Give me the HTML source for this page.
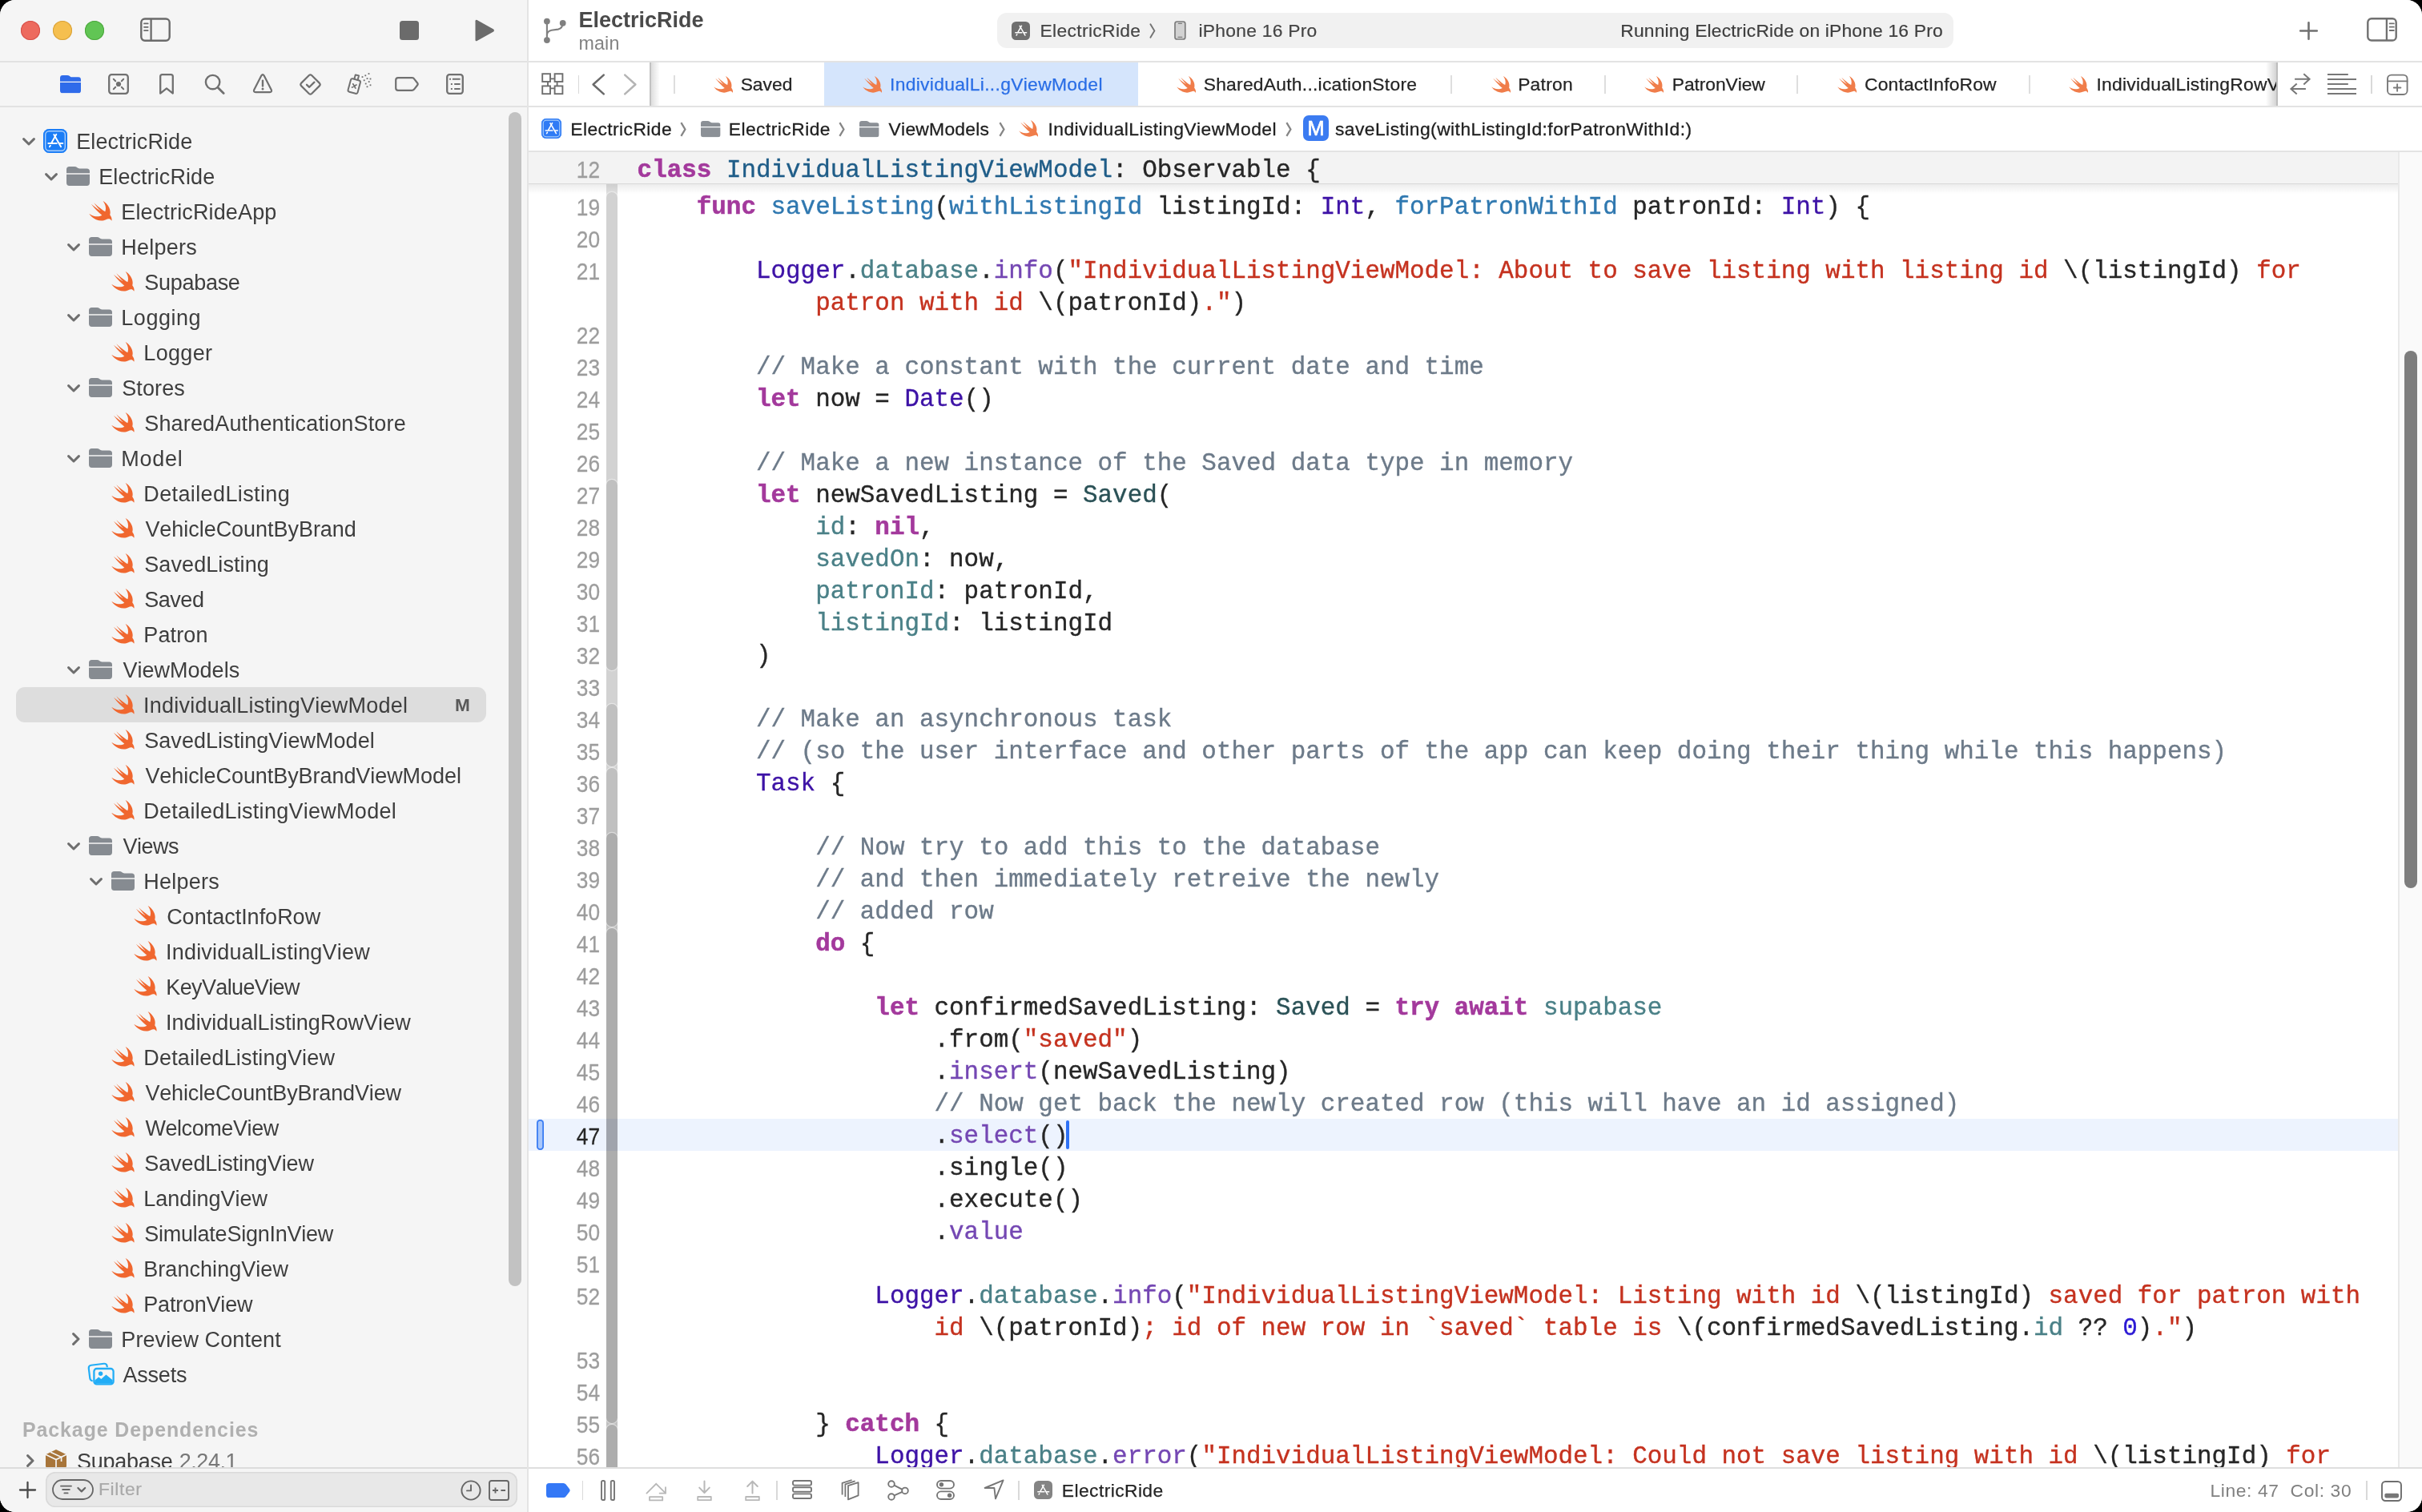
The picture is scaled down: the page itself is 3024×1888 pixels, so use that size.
<!DOCTYPE html>
<html><head><meta charset="utf-8"><title>Xcode</title>
<style>

html,body{margin:0;padding:0;background:#000;}
body{width:3024px;height:1888px;overflow:hidden;position:relative;font-family:"Liberation Sans",sans-serif;font-kerning:none;-webkit-font-smoothing:antialiased;}
#win{position:absolute;left:0;top:0;width:3024px;height:1888px;border-radius:19px;overflow:hidden;background:#fff;will-change:transform;}
.b{position:absolute;display:block;}
.t{position:absolute;white-space:pre;}
svg{overflow:visible;}
.cl{position:absolute;left:795.6px;white-space:pre;font-family:"Liberation Mono",monospace;font-size:30.91px;line-height:40px;height:40px;color:#262626;font-kerning:none;-webkit-text-stroke:0.35px currentColor;}
.cl span{-webkit-text-stroke:0.35px currentColor;}
.ln{position:absolute;left:648.5px;width:100px;text-align:right;font-size:30px;line-height:40px;height:40px;color:#9d9d9d;-webkit-text-stroke:0.3px #9d9d9d;transform:scaleX(0.875);transform-origin:100% 50%;}
.k{color:#a3399c;font-weight:bold;-webkit-text-stroke:0.5px currentColor !important;}
.td{color:#1f5d88;}
.fd{color:#2f78b0;}
.pt{color:#2a5156;}
.pv{color:#4a8087;}
.st{color:#3d12a6;}
.sf{color:#7447b3;}
.s{color:#c5321f;}
.n{color:#2a17d4;}
.c{color:#6c7a89;}

</style></head><body>
<svg width="0" height="0" style="position:absolute">
<defs>
<symbol id="swift" viewBox="2.3 3.4 18.5 16.6" preserveAspectRatio="none"><path d="M13.543 3.41c4.114 2.47 6.545 7.162 5.549 11.131-.024.093-.05.181-.076.272l.002.001c2.062 2.538 1.5 5.258 1.236 4.745-1.072-2.086-3.066-1.568-4.088-1.043a6.803 6.803 0 0 1-.281.158l-.02.012-.002.002c-2.115 1.123-4.957 1.205-7.812-.022a12.568 12.568 0 0 1-5.64-4.838c.649.48 1.35.902 2.097 1.252 3.019 1.414 6.051 1.311 8.197-.002C9.651 12.73 7.101 9.67 5.146 7.191a10.628 10.628 0 0 1-1.005-1.384c2.34 2.142 6.038 4.83 7.365 5.576C8.69 8.408 6.208 4.743 6.324 4.86c4.436 4.47 8.528 6.996 8.528 6.996.154.085.27.154.36.213.085-.215.16-.437.224-.668.708-2.588-.09-5.548-1.893-7.992z"/></symbol>
<symbol id="folder" viewBox="0 0 29 24"><path d="M0 3.6 Q0 0 3.6 0 L10 0 Q12 0 13.4 1.2 L14.6 2.1 Q15.3 2.5 16.4 2.5 L25.4 2.5 Q29 2.5 29 6.1 L29 8.3 L0 8.3 Z M0 9.7 L29 9.7 L29 20.3 Q29 23.9 25.4 23.9 L3.6 23.9 Q0 23.9 0 20.3 Z"/></symbol>
<symbol id="chd" viewBox="0 0 16 10"><path d="M1.6 1.6 L8 8 L14.4 1.6" fill="none" stroke="#6e6e6e" stroke-width="3" stroke-linecap="round" stroke-linejoin="round"/></symbol>
<symbol id="chr" viewBox="0 0 10 16"><path d="M1.6 1.6 L8 8 L1.6 14.4" fill="none" stroke="#6e6e6e" stroke-width="3" stroke-linecap="round" stroke-linejoin="round"/></symbol>
<symbol id="appA" viewBox="0 0 30 30">
 <g fill="none" stroke="#fff" stroke-width="1.9" stroke-linecap="round">
  <path d="M16.3 6.8 L10.4 17.2"/><path d="M13.3 7 L22.1 22.3"/><path d="M6.3 18 H16.8"/><path d="M20.3 18 H24.3"/><path d="M8.9 20.7 L7.9 22.3"/>
 </g>
</symbol>
</defs></svg>
<div id="win">
<div class="b" style="left:0px;top:0px;width:658px;height:1888px;background:#f5f5f5;"></div>
<div class="b" style="left:658px;top:0px;width:2px;height:1888px;background:#e4e4e4;"></div>
<div class="b" style="left:0px;top:76px;width:658px;height:2px;background:#e2e2e2;"></div>
<div class="b" style="left:0px;top:132px;width:658px;height:2px;background:#e2e2e2;"></div>
<div class="b" style="left:26px;top:26px;width:24px;height:24px;background:#ed6a5e;border-radius:50%;box-shadow:inset 0 0 0 1px #d5504a;"></div>
<div class="b" style="left:66px;top:26px;width:24px;height:24px;background:#f5bf4f;border-radius:50%;box-shadow:inset 0 0 0 1px #d8a13a;"></div>
<div class="b" style="left:106px;top:26px;width:24px;height:24px;background:#61c554;border-radius:50%;box-shadow:inset 0 0 0 1px #4da73e;"></div>
<svg class="b" style="left:175px;top:22px" width="38" height="30" viewBox="0 0 38 30"><rect x="1.3" y="1.5" width="35.4" height="27.2" rx="4.6" fill="none" stroke="#6b6b6b" stroke-width="2.4"/><path d="M13.6 1.5 V28.5" stroke="#6b6b6b" stroke-width="2.3"/><path d="M5 7.4 H9.7 M5 11.8 H9.7 M5 16.1 H9.7" stroke="#6b6b6b" stroke-width="1.8" stroke-linecap="round"/></svg>
<div class="b" style="left:499px;top:26px;width:24px;height:24px;background:#6b6b6b;border-radius:3.5px;"></div>
<svg class="b" style="left:591px;top:23px" width="28" height="30" viewBox="0 0 28 30"><path d="M2.5 3.2 Q2.5 1 4.6 2 L25.2 13.4 Q27 15 25.2 16.6 L4.6 28 Q2.5 29 2.5 26.8 Z" fill="#6b6b6b"/></svg>
<svg class="b" style="left:75px;top:94px" width="26" height="22.4" viewBox="0 0 29 24" preserveAspectRatio="none" fill="#2f6bea"><use href="#folder"/></svg>
<svg class="b" style="left:135px;top:92px" width="26" height="26" viewBox="0 0 26 26" fill="none" stroke="#707070" stroke-width="2.3" stroke-linecap="round"><rect x="1.2" y="1.2" width="23.6" height="23.6" rx="3.2"/><circle cx="13" cy="13" r="3.1" fill="#707070" stroke="none"/><path d="M6.8 6.8 L9.2 9.2 M19.2 6.8 L16.8 9.2 M6.8 19.2 L9.2 16.8 M19.2 19.2 L16.8 16.8" stroke-width="2"/></svg>
<svg class="b" style="left:199px;top:92px" width="18" height="26" viewBox="0 0 18 26" fill="none" stroke="#707070" stroke-width="2.3" stroke-linejoin="round"><path d="M1.2 3.6 Q1.2 1.2 3.6 1.2 H14.4 Q16.8 1.2 16.8 3.6 V24.6 L9 18.4 L1.2 24.6 Z"/></svg>
<svg class="b" style="left:255px;top:92px" width="26" height="26" viewBox="0 0 26 26" fill="none" stroke="#707070" stroke-width="2.4" stroke-linecap="round"><circle cx="10.6" cy="10.6" r="8.7"/><path d="M17.2 17.4 L24.2 24.4" stroke-width="2.8"/></svg>
<svg class="b" style="left:315px;top:92px" width="26" height="25" viewBox="0 0 26 25" fill="none" stroke="#707070" stroke-width="2.2" stroke-linejoin="round"><path d="M11.4 2.3 Q13 -0.1 14.6 2.3 L23.7 19.9 Q24.9 23.1 21.9 23.1 H4.1 Q1.1 23.1 2.3 19.9 Z"/><path d="M13 8.6 V15.4" stroke-width="2.4" stroke-linecap="round"/><circle cx="13" cy="19" r="1.5" fill="#707070" stroke="none"/></svg>
<svg class="b" style="left:374px;top:91.5px" width="27" height="27" viewBox="0 0 27 27" fill="none" stroke="#707070" stroke-width="2.2" stroke-linejoin="round" stroke-linecap="round"><path d="M11.9 2 Q13.5 0.6 15.1 2 L25 11.9 Q26.4 13.5 25 15.1 L15.1 25 Q13.5 26.4 11.9 25 L2 15.1 Q0.6 13.5 2 11.9 Z"/><path d="M9 13.8 L12.2 16.8 L18.4 10.6" stroke-width="2.3"/></svg>
<svg class="b" style="left:433.6px;top:90.4px" width="31" height="28" viewBox="0 0 31 28" fill="none" stroke="#707070" stroke-width="2" stroke-linejoin="round" stroke-linecap="round"><g transform="rotate(15 8 17)"><rect x="2.2" y="9" width="12.4" height="17" rx="2.2"/><path d="M6.2 9 V3.4 H10.6 V9"/><path d="M6.2 15.2 L10.6 19.6 M10.6 15.2 L6.2 19.6" stroke-width="1.7"/></g><g fill="#707070" stroke="none"><rect x="25.6" y="1.2" width="1.8" height="1.8"/><rect x="21.4" y="3.4" width="1.8" height="1.8"/><rect x="17.6" y="5.2" width="1.8" height="1.8"/><rect x="23.6" y="7.2" width="1.8" height="1.8"/><rect x="27.6" y="7.6" width="1.8" height="1.8"/><rect x="19.8" y="9.4" width="1.8" height="1.8"/><rect x="25.8" y="11.2" width="1.8" height="1.8"/><rect x="21.8" y="13.6" width="1.8" height="1.8"/><rect x="27.6" y="15.4" width="1.8" height="1.8"/><rect x="23.6" y="17.4" width="1.8" height="1.8"/></g></svg>
<svg class="b" style="left:492.5px;top:96px" width="30" height="18" viewBox="0 0 30 18" fill="none" stroke="#707070" stroke-width="2.2" stroke-linejoin="round"><path d="M4 1.2 H21.6 Q23.4 1.2 24.4 2.8 L28.4 8 Q29 9 28.4 10 L24.4 15.2 Q23.4 16.8 21.6 16.8 H4 Q1.2 16.8 1.2 14 V4 Q1.2 1.2 4 1.2 Z"/></svg>
<svg class="b" style="left:557px;top:92px" width="22" height="26" viewBox="0 0 22 26" fill="none" stroke="#707070" stroke-width="2.3" stroke-linecap="butt"><rect x="1.2" y="1.2" width="19.6" height="23.6" rx="3"/><path d="M7.9 6.8 H17.6 M10.2 12.9 H17.6 M10.2 19 H17.6" stroke-width="2"/><path d="M4.1 6.8 H6 M5.9 12.9 H7.8 M5.9 19 H7.8" stroke-width="2"/></svg>
<div class="b" style="left:635px;top:140px;width:16px;height:1466px;background:#c2c2c2;border-radius:8px;"></div>
<svg class="b" style="left:28.0px;top:171.8px;" width="16" height="10"><use href="#chd"/></svg>
<div class="b" style="left:54px;top:161px;width:30px;height:30px;border-radius:7.5px;background:#1b7df6;box-shadow:inset 0 0 0 2px #1b7df6, inset 0 0 0 3.4px #a7cdfb;"></div>
<svg class="b" style="left:54.0px;top:161.0px;" width="30" height="30"><use href="#appA"/></svg>
<div class="t " style="left:95.29px;top:159.84px;font-size:27.0px;line-height:35px;color:#3e3e3e;letter-spacing:0.079px;">ElectricRide</div>
<svg class="b" style="left:56.0px;top:215.8px;" width="16" height="10"><use href="#chd"/></svg>
<svg class="b" style="left:82.5px;top:208.0px;fill:#868b91;" width="29" height="24"><use href="#folder"/></svg>
<div class="t " style="left:123.29px;top:203.84px;font-size:27.0px;line-height:35px;color:#3e3e3e;letter-spacing:0.079px;">ElectricRide</div>
<svg class="b" style="left:110.6px;top:250.9px;fill:#f0672f;" width="29" height="25.2"><use href="#swift"/></svg>
<div class="t " style="left:151.29px;top:247.84px;font-size:27.0px;line-height:35px;color:#3e3e3e;letter-spacing:0.140px;">ElectricRideApp</div>
<svg class="b" style="left:84.0px;top:303.8px;" width="16" height="10"><use href="#chd"/></svg>
<svg class="b" style="left:110.5px;top:296.0px;fill:#868b91;" width="29" height="24"><use href="#folder"/></svg>
<div class="t " style="left:151.29px;top:291.84px;font-size:27.0px;line-height:35px;color:#3e3e3e;letter-spacing:0.242px;">Helpers</div>
<svg class="b" style="left:138.6px;top:338.9px;fill:#f0672f;" width="29" height="25.2"><use href="#swift"/></svg>
<div class="t " style="left:180.27px;top:335.84px;font-size:27.0px;line-height:35px;color:#3e3e3e;letter-spacing:-0.283px;">Supabase</div>
<svg class="b" style="left:84.0px;top:391.8px;" width="16" height="10"><use href="#chd"/></svg>
<svg class="b" style="left:110.5px;top:384.0px;fill:#868b91;" width="29" height="24"><use href="#folder"/></svg>
<div class="t " style="left:151.29px;top:379.84px;font-size:27.0px;line-height:35px;color:#3e3e3e;letter-spacing:0.543px;">Logging</div>
<svg class="b" style="left:138.6px;top:426.9px;fill:#f0672f;" width="29" height="25.2"><use href="#swift"/></svg>
<div class="t " style="left:179.29px;top:423.84px;font-size:27.0px;line-height:35px;color:#3e3e3e;letter-spacing:0.338px;">Logger</div>
<svg class="b" style="left:84.0px;top:479.8px;" width="16" height="10"><use href="#chd"/></svg>
<svg class="b" style="left:110.5px;top:472.0px;fill:#868b91;" width="29" height="24"><use href="#folder"/></svg>
<div class="t " style="left:152.27px;top:467.84px;font-size:27.0px;line-height:35px;color:#3e3e3e;letter-spacing:0.094px;">Stores</div>
<svg class="b" style="left:138.6px;top:514.9px;fill:#f0672f;" width="29" height="25.2"><use href="#swift"/></svg>
<div class="t " style="left:180.27px;top:511.84px;font-size:27.0px;line-height:35px;color:#3e3e3e;letter-spacing:0.154px;">SharedAuthenticationStore</div>
<svg class="b" style="left:84.0px;top:567.8px;" width="16" height="10"><use href="#chd"/></svg>
<svg class="b" style="left:110.5px;top:560.0px;fill:#868b91;" width="29" height="24"><use href="#folder"/></svg>
<div class="t " style="left:151.29px;top:555.84px;font-size:27.0px;line-height:35px;color:#3e3e3e;letter-spacing:0.746px;">Model</div>
<svg class="b" style="left:138.6px;top:602.9px;fill:#f0672f;" width="29" height="25.2"><use href="#swift"/></svg>
<div class="t " style="left:179.29px;top:599.84px;font-size:27.0px;line-height:35px;color:#3e3e3e;letter-spacing:0.382px;">DetailedListing</div>
<svg class="b" style="left:138.6px;top:646.9px;fill:#f0672f;" width="29" height="25.2"><use href="#swift"/></svg>
<div class="t " style="left:181.38px;top:643.84px;font-size:27.0px;line-height:35px;color:#3e3e3e;letter-spacing:-0.039px;">VehicleCountByBrand</div>
<svg class="b" style="left:138.6px;top:690.9px;fill:#f0672f;" width="29" height="25.2"><use href="#swift"/></svg>
<div class="t " style="left:180.27px;top:687.84px;font-size:27.0px;line-height:35px;color:#3e3e3e;letter-spacing:0.087px;">SavedListing</div>
<svg class="b" style="left:138.6px;top:734.9px;fill:#f0672f;" width="29" height="25.2"><use href="#swift"/></svg>
<div class="t " style="left:180.27px;top:731.84px;font-size:27.0px;line-height:35px;color:#3e3e3e;letter-spacing:-0.473px;">Saved</div>
<svg class="b" style="left:138.6px;top:778.9px;fill:#f0672f;" width="29" height="25.2"><use href="#swift"/></svg>
<div class="t " style="left:179.29px;top:775.84px;font-size:27.0px;line-height:35px;color:#3e3e3e;letter-spacing:0.144px;">Patron</div>
<svg class="b" style="left:84.0px;top:831.8px;" width="16" height="10"><use href="#chd"/></svg>
<svg class="b" style="left:110.5px;top:824.0px;fill:#868b91;" width="29" height="24"><use href="#folder"/></svg>
<div class="t " style="left:153.38px;top:819.84px;font-size:27.0px;line-height:35px;color:#3e3e3e;letter-spacing:0.026px;">ViewModels</div>
<div class="b" style="left:20px;top:858px;width:587px;height:44px;background:#dddddd;border-radius:11px;"></div>
<div class="t " style="left:567.99px;top:866.37px;font-size:22.6px;line-height:29px;color:#5a5a5a;font-weight:bold;">M</div>
<svg class="b" style="left:138.6px;top:866.9px;fill:#f0672f;" width="29" height="25.2"><use href="#swift"/></svg>
<div class="t " style="left:179.01px;top:863.84px;font-size:27.0px;line-height:35px;color:#3e3e3e;letter-spacing:0.229px;">IndividualListingViewModel</div>
<svg class="b" style="left:138.6px;top:910.9px;fill:#f0672f;" width="29" height="25.2"><use href="#swift"/></svg>
<div class="t " style="left:180.27px;top:907.84px;font-size:27.0px;line-height:35px;color:#3e3e3e;letter-spacing:0.038px;">SavedListingViewModel</div>
<svg class="b" style="left:138.6px;top:954.9px;fill:#f0672f;" width="29" height="25.2"><use href="#swift"/></svg>
<div class="t " style="left:181.38px;top:951.84px;font-size:27.0px;line-height:35px;color:#3e3e3e;letter-spacing:-0.063px;">VehicleCountByBrandViewModel</div>
<svg class="b" style="left:138.6px;top:998.9px;fill:#f0672f;" width="29" height="25.2"><use href="#swift"/></svg>
<div class="t " style="left:179.29px;top:995.84px;font-size:27.0px;line-height:35px;color:#3e3e3e;letter-spacing:0.272px;">DetailedListingViewModel</div>
<svg class="b" style="left:84.0px;top:1051.8px;" width="16" height="10"><use href="#chd"/></svg>
<svg class="b" style="left:110.5px;top:1044.0px;fill:#868b91;" width="29" height="24"><use href="#folder"/></svg>
<div class="t " style="left:153.38px;top:1039.84px;font-size:27.0px;line-height:35px;color:#3e3e3e;letter-spacing:-0.482px;">Views</div>
<svg class="b" style="left:112.0px;top:1095.8px;" width="16" height="10"><use href="#chd"/></svg>
<svg class="b" style="left:138.5px;top:1088.0px;fill:#868b91;" width="29" height="24"><use href="#folder"/></svg>
<div class="t " style="left:179.29px;top:1083.84px;font-size:27.0px;line-height:35px;color:#3e3e3e;letter-spacing:0.242px;">Helpers</div>
<svg class="b" style="left:166.6px;top:1130.9px;fill:#f0672f;" width="29" height="25.2"><use href="#swift"/></svg>
<div class="t " style="left:208.13px;top:1127.84px;font-size:27.0px;line-height:35px;color:#3e3e3e;letter-spacing:-0.007px;">ContactInfoRow</div>
<svg class="b" style="left:166.6px;top:1174.9px;fill:#f0672f;" width="29" height="25.2"><use href="#swift"/></svg>
<div class="t " style="left:207.01px;top:1171.84px;font-size:27.0px;line-height:35px;color:#3e3e3e;letter-spacing:0.204px;">IndividualListingView</div>
<svg class="b" style="left:166.6px;top:1218.9px;fill:#f0672f;" width="29" height="25.2"><use href="#swift"/></svg>
<div class="t " style="left:207.29px;top:1215.84px;font-size:27.0px;line-height:35px;color:#3e3e3e;letter-spacing:-0.632px;">KeyValueView</div>
<svg class="b" style="left:166.6px;top:1262.9px;fill:#f0672f;" width="29" height="25.2"><use href="#swift"/></svg>
<div class="t " style="left:207.01px;top:1259.84px;font-size:27.0px;line-height:35px;color:#3e3e3e;letter-spacing:0.046px;">IndividualListingRowView</div>
<svg class="b" style="left:138.6px;top:1306.9px;fill:#f0672f;" width="29" height="25.2"><use href="#swift"/></svg>
<div class="t " style="left:179.29px;top:1303.84px;font-size:27.0px;line-height:35px;color:#3e3e3e;letter-spacing:0.168px;">DetailedListingView</div>
<svg class="b" style="left:138.6px;top:1350.9px;fill:#f0672f;" width="29" height="25.2"><use href="#swift"/></svg>
<div class="t " style="left:181.38px;top:1347.84px;font-size:27.0px;line-height:35px;color:#3e3e3e;letter-spacing:-0.138px;">VehicleCountByBrandView</div>
<svg class="b" style="left:138.6px;top:1394.9px;fill:#f0672f;" width="29" height="25.2"><use href="#swift"/></svg>
<div class="t " style="left:181.38px;top:1391.84px;font-size:27.0px;line-height:35px;color:#3e3e3e;letter-spacing:-0.419px;">WelcomeView</div>
<svg class="b" style="left:138.6px;top:1438.9px;fill:#f0672f;" width="29" height="25.2"><use href="#swift"/></svg>
<div class="t " style="left:180.27px;top:1435.84px;font-size:27.0px;line-height:35px;color:#3e3e3e;letter-spacing:-0.091px;">SavedListingView</div>
<svg class="b" style="left:138.6px;top:1482.9px;fill:#f0672f;" width="29" height="25.2"><use href="#swift"/></svg>
<div class="t " style="left:179.29px;top:1479.84px;font-size:27.0px;line-height:35px;color:#3e3e3e;letter-spacing:0.013px;">LandingView</div>
<svg class="b" style="left:138.6px;top:1526.9px;fill:#f0672f;" width="29" height="25.2"><use href="#swift"/></svg>
<div class="t " style="left:180.27px;top:1523.84px;font-size:27.0px;line-height:35px;color:#3e3e3e;letter-spacing:-0.239px;">SimulateSignInView</div>
<svg class="b" style="left:138.6px;top:1570.9px;fill:#f0672f;" width="29" height="25.2"><use href="#swift"/></svg>
<div class="t " style="left:179.29px;top:1567.84px;font-size:27.0px;line-height:35px;color:#3e3e3e;letter-spacing:0.046px;">BranchingView</div>
<svg class="b" style="left:138.6px;top:1614.9px;fill:#f0672f;" width="29" height="25.2"><use href="#swift"/></svg>
<div class="t " style="left:179.29px;top:1611.84px;font-size:27.0px;line-height:35px;color:#3e3e3e;letter-spacing:-0.214px;">PatronView</div>
<svg class="b" style="left:89.5px;top:1664.0px;" width="10" height="16"><use href="#chr"/></svg>
<svg class="b" style="left:110.5px;top:1660.0px;fill:#868b91;" width="29" height="24"><use href="#folder"/></svg>
<div class="t " style="left:151.29px;top:1655.84px;font-size:27.0px;line-height:35px;color:#3e3e3e;letter-spacing:0.094px;">Preview Content</div>
<svg class="b" style="left:108.5px;top:1701px" width="34" height="29" viewBox="0 0 34 29"><g transform="rotate(-7 13 12)"><rect x="2.4" y="2.8" width="23" height="19.6" rx="3.4" fill="none" stroke="#22adf6" stroke-width="2.2"/></g><rect x="8.4" y="8" width="24.2" height="19.4" rx="3.4" fill="#f5f5f5" stroke="#f5f5f5" stroke-width="3.4"/><rect x="8.4" y="8" width="24.2" height="19.4" rx="3.4" fill="#f5f5f5" stroke="#22adf6" stroke-width="2.3"/><circle cx="16.6" cy="14.2" r="2.7" fill="#22adf6"/><path d="M9.4 22.6 L14.2 18.4 L17.4 21 L23.4 15.6 L31.6 22.2 V24.4 Q31.6 26.4 29.6 26.4 H11.4 Q9.4 26.4 9.4 24.4 Z" fill="#22adf6"/></svg>
<div class="t " style="left:153.45px;top:1699.84px;font-size:27.0px;line-height:35px;color:#3e3e3e;letter-spacing:-0.200px;">Assets</div>
<div class="t " style="left:28.03px;top:1768.57px;font-size:24.92px;line-height:32px;color:#b0b0b0;font-weight:bold;letter-spacing:0.919px;">Package Dependencies</div>
<svg class="b" style="left:33.0px;top:1816.0px;" width="10" height="16"><use href="#chr"/></svg>
<svg class="b" style="left:56px;top:1809px" width="28" height="30" viewBox="0 0 28 30"><path d="M14 1 L27 7.2 V22.4 L14 29 L1 22.4 V7.2 Z" fill="#a8753a"/><path d="M1 7.2 L14 13.6 L27 7.2 M14 13.6 V29" fill="none" stroke="#f5f5f5" stroke-width="1.7"/><path d="M7.2 4.2 L20.6 10.6 V16" fill="none" stroke="#f5f5f5" stroke-width="1.7"/></svg>
<div class="t " style="left:96.07px;top:1807.84px;font-size:27.0px;line-height:35px;color:#3e3e3e;letter-spacing:-0.283px;">Supabase</div>
<div class="t " style="left:223.64px;top:1807.84px;font-size:27.0px;line-height:35px;color:#777777;letter-spacing:-0.418px;">2.24.1</div>
<div class="b" style="left:0px;top:1833px;width:658px;height:55px;background:#f5f5f5;"></div>
<div class="b" style="left:0px;top:1832px;width:658px;height:2px;background:#dcdcdc;"></div>
<div class="b" style="left:57px;top:1837.8px;width:589px;height:43.8px;background:#e8e8e8;border-radius:12px;box-shadow:inset 0 0 0 1.5px #d9d9d9;"></div>
<svg class="b" style="left:24px;top:1850px" width="21" height="21" viewBox="0 0 22 22"><path d="M11 1 V21 M1 11 H21" stroke="#4a4a4a" stroke-width="2.4" stroke-linecap="round"/></svg>
<svg class="b" style="left:65px;top:1847px" width="52" height="26" viewBox="0 0 52 26"><rect x="1" y="1" width="50" height="24" rx="12" fill="none" stroke="#666" stroke-width="1.8"/><path d="M11 8.6 H24 M13.2 13 H21.8 M15.4 17.4 H19.6" stroke="#666" stroke-width="1.9" stroke-linecap="round"/><path d="M32.4 11 L36.8 15.4 L41.2 11" fill="none" stroke="#666" stroke-width="2.2" stroke-linecap="round" stroke-linejoin="round"/></svg>
<div class="t " style="left:122.93px;top:1843.98px;font-size:22.85px;line-height:30px;color:#a9a9a9;-webkit-text-stroke:0.2px #a9a9a9;letter-spacing:0.655px;">Filter</div>
<svg class="b" style="left:575px;top:1847.5px" width="26" height="26" viewBox="0 0 26 26"><circle cx="13" cy="13" r="11.6" fill="none" stroke="#666" stroke-width="1.9"/><path d="M13 6.4 V13.4 H8" fill="none" stroke="#666" stroke-width="1.9" stroke-linecap="round" stroke-linejoin="round"/></svg>
<svg class="b" style="left:609.5px;top:1847.5px" width="26" height="26" viewBox="0 0 26 26"><rect x="1" y="1" width="24" height="24" rx="2.6" fill="none" stroke="#666" stroke-width="1.9"/><path d="M5 13 H12 M8.5 9.5 V16.5 M15.4 13 H21" stroke="#666" stroke-width="1.9"/></svg>
<div class="b" style="left:660px;top:0px;width:2364px;height:76px;background:#ffffff;"></div>
<div class="b" style="left:660px;top:76px;width:2364px;height:2px;background:#e3e3e3;"></div>
<svg class="b" style="left:677px;top:20px" width="32" height="36" viewBox="0 0 32 36" fill="none" stroke="#808080" stroke-width="2.1" stroke-linecap="round"><path d="M5.9 6.6 V30.1"/><path d="M25.7 8.8 Q25.5 15.6 19.8 16.6 L11.6 17.8 Q6 19 5.9 24"/><circle cx="5.9" cy="6.6" r="3.9" fill="#808080" stroke="none"/><circle cx="5.9" cy="30.1" r="3.9" fill="#808080" stroke="none"/><circle cx="25.7" cy="8.8" r="3.9" fill="#808080" stroke="none"/></svg>
<div class="t " style="left:722.49px;top:8.14px;font-size:27.0px;line-height:35px;color:#4a4a4a;font-weight:bold;">ElectricRide</div>
<div class="t " style="left:722.46px;top:38.74px;font-size:23.26px;line-height:30px;color:#828282;letter-spacing:0.180px;">main</div>
<div class="b" style="left:1245px;top:16px;width:1194px;height:44px;background:#f1f1f1;border-radius:12px;"></div>
<div class="b" style="left:1263px;top:27px;width:23px;height:23px;background:#6f6f6f;border-radius:5.5px;"></div>
<svg class="b" style="left:1263.0px;top:27.0px;" width="23" height="23"><use href="#appA"/></svg>
<div class="t " style="left:1298.43px;top:23.28px;font-size:22.85px;line-height:30px;color:#444;-webkit-text-stroke:0.2px #444;letter-spacing:0.344px;">ElectricRide</div>
<svg class="b" style="left:1435px;top:29px" width="8" height="19" viewBox="0 0 8 19"><path d="M1.4 1.2 L6.4 9.5 L1.4 17.8" fill="none" stroke="#737373" stroke-width="1.9" stroke-linecap="round" stroke-linejoin="miter"/></svg>
<svg class="b" style="left:1465.8px;top:26.2px" width="15" height="24" viewBox="0 0 15 24"><rect x="1" y="1" width="12.8" height="22" rx="2.6" fill="#d2d2d2" stroke="#7c7c7c" stroke-width="1.7"/><path d="M5.4 3.4 H9.4 M5 20.4 H9.8" stroke="#7c7c7c" stroke-width="1.2" stroke-linecap="round"/></svg>
<div class="t " style="left:1496.47px;top:23.28px;font-size:22.85px;line-height:30px;color:#444;-webkit-text-stroke:0.2px #444;letter-spacing:0.247px;">iPhone 16 Pro</div>
<div class="t " style="left:2023.33px;top:23.28px;font-size:22.85px;line-height:30px;color:#3e3e3e;-webkit-text-stroke:0.2px #3e3e3e;letter-spacing:0.170px;">Running ElectricRide on iPhone 16 Pro</div>
<svg class="b" style="left:2870.5px;top:26.5px" width="23" height="23" viewBox="0 0 23 23"><path d="M11.5 1.2 V21.8 M1.2 11.5 H21.8" stroke="#707070" stroke-width="2.6" stroke-linecap="round"/></svg>
<svg class="b" style="left:2955px;top:22.3px" width="38" height="30" viewBox="0 0 38 30"><rect x="1.3" y="1.3" width="35.4" height="27.2" rx="4.6" fill="none" stroke="#707070" stroke-width="2.4"/><path d="M24.9 1.5 V28.5" stroke="#707070" stroke-width="2.3"/><path d="M28.6 7.4 H33.8 M28.6 11.7 H33.8 M28.6 16 H33.8" stroke="#707070" stroke-width="1.8" stroke-linecap="round"/></svg>
<div class="b" style="left:660px;top:78px;width:2364px;height:54px;background:#ffffff;"></div>
<div class="b" style="left:660px;top:132px;width:2364px;height:2px;background:#e3e3e3;"></div>
<div class="b" style="left:1029px;top:78px;width:392px;height:54px;background:#d5e5fc;"></div>
<svg class="b" style="left:676.3px;top:91.4px" width="28" height="28" viewBox="0 0 28 28" fill="none" stroke="#6e6e6e" stroke-width="1.9"><rect x="1.2" y="1.2" width="9.8" height="9.8"/><rect x="16.6" y="1.2" width="9.8" height="9.8"/><rect x="1.2" y="16.4" width="9.8" height="9.8"/><rect x="16.6" y="16.4" width="9.8" height="9.8"/><path d="M11 7.4 H16.6 M11 19.4 H16.6 M8 11 V16.4 M19.6 11 V16.4"/></svg>
<div class="b" style="left:721.5px;top:94px;width:1.6px;height:23px;background:#d9d9d9;"></div>
<svg class="b" style="left:738px;top:92px" width="18" height="27" viewBox="0 0 18 27"><path d="M15.8 1.6 L2.6 13.5 L15.8 25.4" fill="none" stroke="#6a6a6a" stroke-width="2.5" stroke-linecap="round" stroke-linejoin="round"/></svg>
<svg class="b" style="left:778px;top:92px" width="18" height="27" viewBox="0 0 18 27"><path d="M2.2 1.6 L15.4 13.5 L2.2 25.4" fill="none" stroke="#b4b4b4" stroke-width="2.5" stroke-linecap="round" stroke-linejoin="round"/></svg>
<div class="b" style="left:811px;top:78px;width:2.2px;height:54px;background:#c2c2c2;"></div>
<div class="b" style="left:813.2px;top:78px;width:11px;height:54px;background:transparent;background:linear-gradient(90deg,rgba(0,0,0,0.13),rgba(0,0,0,0));"></div>
<div class="b" style="left:841px;top:94px;width:2px;height:23px;background:#dedede;"></div>
<div class="b" style="left:1811px;top:94px;width:2px;height:23px;background:#dedede;"></div>
<div class="b" style="left:2003px;top:94px;width:2px;height:23px;background:#dedede;"></div>
<div class="b" style="left:2243px;top:94px;width:2px;height:23px;background:#dedede;"></div>
<div class="b" style="left:2533px;top:94px;width:2px;height:23px;background:#dedede;"></div>
<svg class="b" style="left:891.0px;top:94.5px;fill:#f07d4a;" width="24.5" height="21.3"><use href="#swift"/></svg>
<div class="t " style="left:924.66px;top:90.18px;font-size:22.85px;line-height:30px;color:#242424;-webkit-text-stroke:0.25px #242424;letter-spacing:-0.020px;">Saved</div>
<svg class="b" style="left:1077.0px;top:94.5px;fill:#f07d4a;" width="24.5" height="21.3"><use href="#swift"/></svg>
<div class="t " style="left:1110.99px;top:90.18px;font-size:22.85px;line-height:30px;color:#2a6ee6;-webkit-text-stroke:0.25px #2a6ee6;letter-spacing:0.321px;">IndividualLi...gViewModel</div>
<svg class="b" style="left:1469.4px;top:94.5px;fill:#f07d4a;" width="24.5" height="21.3"><use href="#swift"/></svg>
<div class="t " style="left:1502.66px;top:90.18px;font-size:22.85px;line-height:30px;color:#242424;-webkit-text-stroke:0.25px #242424;letter-spacing:0.248px;">SharedAuth...icationStore</div>
<svg class="b" style="left:1861.5px;top:94.5px;fill:#f07d4a;" width="24.5" height="21.3"><use href="#swift"/></svg>
<div class="t " style="left:1895.13px;top:90.18px;font-size:22.85px;line-height:30px;color:#242424;-webkit-text-stroke:0.25px #242424;letter-spacing:0.247px;">Patron</div>
<svg class="b" style="left:2053.0px;top:94.5px;fill:#f07d4a;" width="24.5" height="21.3"><use href="#swift"/></svg>
<div class="t " style="left:2087.83px;top:90.18px;font-size:22.85px;line-height:30px;color:#242424;-webkit-text-stroke:0.25px #242424;letter-spacing:-0.092px;">PatronView</div>
<svg class="b" style="left:2294.0px;top:94.5px;fill:#f07d4a;" width="24.5" height="21.3"><use href="#swift"/></svg>
<div class="t " style="left:2328.04px;top:90.18px;font-size:22.85px;line-height:30px;color:#242424;-webkit-text-stroke:0.25px #242424;letter-spacing:0.149px;">ContactInfoRow</div>
<svg class="b" style="left:2583.0px;top:94.5px;fill:#f07d4a;" width="24.5" height="21.3"><use href="#swift"/></svg>
<div class="t " style="left:2617.39px;top:90.18px;font-size:22.85px;line-height:30px;color:#242424;-webkit-text-stroke:0.25px #242424;letter-spacing:0.253px;">IndividualListingRowV</div>
<div class="b" style="left:2844px;top:78px;width:180px;height:54px;background:#ffffff;"></div>
<div class="b" style="left:2829px;top:78px;width:12.5px;height:54px;background:transparent;background:linear-gradient(90deg,rgba(0,0,0,0),rgba(0,0,0,0.17));"></div>
<div class="b" style="left:2841.5px;top:78px;width:2.6px;height:54px;background:#bdbdbd;"></div>
<svg class="b" style="left:2858px;top:90px" width="30" height="30" viewBox="0 0 30 30" fill="none" stroke="#777" stroke-width="2" stroke-linecap="butt" stroke-linejoin="miter"><path d="M7.1 8.7 H25 M18.3 2.2 L25.6 8.7 L18.3 15.4"/><path d="M20.9 21 H3 M9.7 14.4 L2.4 21 L9.7 27.6"/></svg>
<svg class="b" style="left:2906px;top:92px" width="36" height="26" viewBox="0 0 36 26" stroke="#777" stroke-width="1.9"><path d="M0 1 H25.8 M0 7 H36 M0 13 H25.8 M0 19 H36 M0 25 H36"/></svg>
<div class="b" style="left:2960px;top:94px;width:1.6px;height:23px;background:#d9d9d9;"></div>
<svg class="b" style="left:2980px;top:92.5px" width="27" height="26" viewBox="0 0 27 26" fill="none" stroke="#7a7a7a" stroke-width="1.9" stroke-linecap="round"><rect x="1" y="0.6" width="24.6" height="24.4" rx="4.8"/><path d="M1 8.4 H25.6"/><path d="M13.1 12.2 V20.8 M8.8 16.5 H17.4"/></svg>
<div class="b" style="left:660px;top:134px;width:2364px;height:54px;background:#ffffff;"></div>
<div class="b" style="left:660px;top:188px;width:2364px;height:1.5px;background:#e3e3e3;"></div>
<div class="b" style="left:676px;top:148px;width:25px;height:25px;border-radius:6px;background:#2f7bf5;box-shadow:inset 0 0 0 1.6px #2f7bf5, inset 0 0 0 2.8px #a7cdfb;"></div>
<svg class="b" style="left:676.0px;top:148.0px;" width="25" height="25"><use href="#appA"/></svg>
<div class="t " style="left:712.33px;top:146.38px;font-size:22.85px;line-height:30px;color:#1f1f1f;-webkit-text-stroke:0.3px #1f1f1f;letter-spacing:0.399px;">ElectricRide</div>
<svg class="b" style="left:849.3px;top:152.2px" width="8" height="19" viewBox="0 0 8 19"><path d="M1.4 1.2 L6.4 9.5 L1.4 17.8" fill="none" stroke="#868686" stroke-width="2.3" stroke-linecap="butt" stroke-linejoin="miter"/></svg>
<svg class="b" style="left:874.8px;top:150.6px;fill:#8b9096;" width="24.6" height="20.4"><use href="#folder"/></svg>
<div class="t " style="left:909.73px;top:146.38px;font-size:22.85px;line-height:30px;color:#1f1f1f;-webkit-text-stroke:0.3px #1f1f1f;letter-spacing:0.453px;">ElectricRide</div>
<svg class="b" style="left:1047.3px;top:152.2px" width="8" height="19" viewBox="0 0 8 19"><path d="M1.4 1.2 L6.4 9.5 L1.4 17.8" fill="none" stroke="#868686" stroke-width="2.3" stroke-linecap="butt" stroke-linejoin="miter"/></svg>
<svg class="b" style="left:1072.9px;top:150.6px;fill:#8b9096;" width="24.6" height="20.4"><use href="#folder"/></svg>
<div class="t " style="left:1109.60px;top:146.38px;font-size:22.85px;line-height:30px;color:#1f1f1f;-webkit-text-stroke:0.3px #1f1f1f;letter-spacing:0.249px;">ViewModels</div>
<svg class="b" style="left:1246.8px;top:152.2px" width="8" height="19" viewBox="0 0 8 19"><path d="M1.4 1.2 L6.4 9.5 L1.4 17.8" fill="none" stroke="#868686" stroke-width="2.3" stroke-linecap="butt" stroke-linejoin="miter"/></svg>
<svg class="b" style="left:1272.3px;top:150.0px;fill:#f07d4a;" width="24.5" height="21.3"><use href="#swift"/></svg>
<div class="t " style="left:1308.49px;top:146.38px;font-size:22.85px;line-height:30px;color:#1f1f1f;-webkit-text-stroke:0.3px #1f1f1f;letter-spacing:0.431px;">IndividualListingViewModel</div>
<svg class="b" style="left:1604.6px;top:152.2px" width="8" height="19" viewBox="0 0 8 19"><path d="M1.4 1.2 L6.4 9.5 L1.4 17.8" fill="none" stroke="#868686" stroke-width="2.3" stroke-linecap="butt" stroke-linejoin="miter"/></svg>
<div class="b" style="left:1627px;top:144px;width:32px;height:32px;background:#3b7bf1;border-radius:7px;"></div>
<div class="t " style="left:1632.53px;top:144.17px;font-size:25.2px;line-height:33px;color:#ffffff;-webkit-text-stroke:0.7px #ffffff;">M</div>
<div class="t " style="left:1666.96px;top:146.38px;font-size:22.85px;line-height:30px;color:#1f1f1f;-webkit-text-stroke:0.3px #1f1f1f;letter-spacing:0.441px;">saveListing(withListingId:forPatronWithId:)</div>
<div class="b" style="left:660px;top:189.5px;width:2334px;height:1643px;background:#ffffff;"></div>
<div class="b" style="left:2994px;top:189.5px;width:30px;height:1643px;background:#fafafa;"></div>
<div class="b" style="left:2994px;top:189.5px;width:2px;height:1643px;background:#e9e9e9;"></div>
<div class="b" style="left:3002px;top:438px;width:16px;height:671px;background:#7d7d7d;border-radius:8px;"></div>
<div class="b" style="left:660px;top:1397.1px;width:2334px;height:39.6px;background:#edf3fe;"></div>
<div class="b" style="left:669.5px;top:1397.6px;width:9px;height:38.6px;background:#a9c7fb;border-radius:4.5px;box-shadow:inset 0 0 0 1.8px #3b7df3;"></div>
<div class="b" style="left:757.2px;top:225px;width:13.7px;height:1615px;background:#dfdfdf;border-radius:0px 0px 0px 0px;"></div>
<div class="b" style="left:757.2px;top:239.5px;width:13.7px;height:1600.5px;background:#d2d2d2;border-radius:6.85px 6.85px 0px 0px;box-shadow:0 0 0 1.2px rgba(255,255,255,0.42);"></div>
<div class="b" style="left:757.2px;top:599px;width:13.7px;height:238px;background:#c0c0c0;border-radius:6.85px 6.85px 6.85px 6.85px;box-shadow:0 0 0 1.2px rgba(255,255,255,0.42);"></div>
<div class="b" style="left:757.2px;top:879px;width:13.7px;height:77.5px;background:#c0c0c0;border-radius:6.85px 6.85px 6.85px 6.85px;box-shadow:0 0 0 1.2px rgba(255,255,255,0.42);"></div>
<div class="b" style="left:757.2px;top:959px;width:13.7px;height:881px;background:#c0c0c0;border-radius:6.85px 6.85px 0px 0px;box-shadow:0 0 0 1.2px rgba(255,255,255,0.42);"></div>
<div class="b" style="left:757.2px;top:1039.5px;width:13.7px;height:117.0px;background:#adadad;border-radius:6.85px 6.85px 6.85px 6.85px;box-shadow:0 0 0 1.2px rgba(255,255,255,0.42);"></div>
<div class="b" style="left:757.2px;top:1159px;width:13.7px;height:617.5px;background:#adadad;border-radius:6.85px 6.85px 6.85px 6.85px;box-shadow:0 0 0 1.2px rgba(255,255,255,0.42);"></div>
<div class="b" style="left:757.2px;top:1779px;width:13.7px;height:61px;background:#adadad;border-radius:6.85px 6.85px 0px 0px;box-shadow:0 0 0 1.2px rgba(255,255,255,0.42);"></div>
<div class="b" style="left:755.2px;top:1397.1px;width:17.7px;height:39.6px;background:#edf3fe;"></div>
<div class="b" style="left:757.2px;top:1397.1px;width:13.7px;height:39.6px;background:#a0a4ad;"></div>
<div class="ln" style="top:238.6px">19</div>
<div class="cl" style="top:239.1px">    <span class="k">func</span> <span class="fd">saveListing</span>(<span class="fd">withListingId</span> listingId: <span class="st">Int</span>, <span class="fd">forPatronWithId</span> patronId: <span class="st">Int</span>) {</div>
<div class="ln" style="top:278.6px">20</div>
<div class="ln" style="top:318.6px">21</div>
<div class="cl" style="top:319.1px">        <span class="st">Logger</span>.<span class="pv">database</span>.<span class="sf">info</span>(<span class="s">"IndividualListingViewModel: About to save listing with listing id </span>\(listingId)<span class="s"> for</span></div>
<div class="cl" style="top:359.1px">            <span class="s">patron with id </span>\(patronId)<span class="s">."</span>)</div>
<div class="ln" style="top:398.6px">22</div>
<div class="ln" style="top:438.6px">23</div>
<div class="cl" style="top:439.1px">        <span class="c">// Make a constant with the current date and time</span></div>
<div class="ln" style="top:478.6px">24</div>
<div class="cl" style="top:479.1px">        <span class="k">let</span> now = <span class="st">Date</span>()</div>
<div class="ln" style="top:518.6px">25</div>
<div class="ln" style="top:558.6px">26</div>
<div class="cl" style="top:559.1px">        <span class="c">// Make a new instance of the Saved data type in memory</span></div>
<div class="ln" style="top:598.6px">27</div>
<div class="cl" style="top:599.1px">        <span class="k">let</span> newSavedListing = <span class="pt">Saved</span>(</div>
<div class="ln" style="top:638.6px">28</div>
<div class="cl" style="top:639.1px">            <span class="pv">id</span>: <span class="k">nil</span>,</div>
<div class="ln" style="top:678.6px">29</div>
<div class="cl" style="top:679.1px">            <span class="pv">savedOn</span>: now,</div>
<div class="ln" style="top:718.6px">30</div>
<div class="cl" style="top:719.1px">            <span class="pv">patronId</span>: patronId,</div>
<div class="ln" style="top:758.6px">31</div>
<div class="cl" style="top:759.1px">            <span class="pv">listingId</span>: listingId</div>
<div class="ln" style="top:798.6px">32</div>
<div class="cl" style="top:799.1px">        )</div>
<div class="ln" style="top:838.6px">33</div>
<div class="ln" style="top:878.6px">34</div>
<div class="cl" style="top:879.1px">        <span class="c">// Make an asynchronous task</span></div>
<div class="ln" style="top:918.6px">35</div>
<div class="cl" style="top:919.1px">        <span class="c">// (so the user interface and other parts of the app can keep doing their thing while this happens)</span></div>
<div class="ln" style="top:958.6px">36</div>
<div class="cl" style="top:959.1px">        <span class="st">Task</span> {</div>
<div class="ln" style="top:998.6px">37</div>
<div class="ln" style="top:1038.6px">38</div>
<div class="cl" style="top:1039.1px">            <span class="c">// Now try to add this to the database</span></div>
<div class="ln" style="top:1078.6px">39</div>
<div class="cl" style="top:1079.1px">            <span class="c">// and then immediately retreive the newly</span></div>
<div class="ln" style="top:1118.6px">40</div>
<div class="cl" style="top:1119.1px">            <span class="c">// added row</span></div>
<div class="ln" style="top:1158.6px">41</div>
<div class="cl" style="top:1159.1px">            <span class="k">do</span> {</div>
<div class="ln" style="top:1198.6px">42</div>
<div class="ln" style="top:1238.6px">43</div>
<div class="cl" style="top:1239.1px">                <span class="k">let</span> confirmedSavedListing: <span class="pt">Saved</span> = <span class="k">try</span> <span class="k">await</span> <span class="pv">supabase</span></div>
<div class="ln" style="top:1278.6px">44</div>
<div class="cl" style="top:1279.1px">                    .from(<span class="s">"saved"</span>)</div>
<div class="ln" style="top:1318.6px">45</div>
<div class="cl" style="top:1319.1px">                    .<span class="sf">insert</span>(newSavedListing)</div>
<div class="ln" style="top:1358.6px">46</div>
<div class="cl" style="top:1359.1px">                    <span class="c">// Now get back the newly created row (this will have an id assigned)</span></div>
<div class="ln" style="top:1398.6px;color:#262626;-webkit-text-stroke:0.3px #262626;">47</div>
<div class="cl" style="top:1399.1px">                    .<span class="sf">select</span>()</div>
<div class="ln" style="top:1438.6px">48</div>
<div class="cl" style="top:1439.1px">                    .single()</div>
<div class="ln" style="top:1478.6px">49</div>
<div class="cl" style="top:1479.1px">                    .execute()</div>
<div class="ln" style="top:1518.6px">50</div>
<div class="cl" style="top:1519.1px">                    .<span class="sf">value</span></div>
<div class="ln" style="top:1558.6px">51</div>
<div class="ln" style="top:1598.6px">52</div>
<div class="cl" style="top:1599.1px">                <span class="st">Logger</span>.<span class="pv">database</span>.<span class="sf">info</span>(<span class="s">"IndividualListingViewModel: Listing with id </span>\(listingId)<span class="s"> saved for patron with</span></div>
<div class="cl" style="top:1639.1px">                    <span class="s">id </span>\(patronId)<span class="s">; id of new row in `saved` table is </span>\(confirmedSavedListing.<span class="pv">id</span> ?? <span class="n">0</span>)<span class="s">."</span>)</div>
<div class="ln" style="top:1678.6px">53</div>
<div class="ln" style="top:1718.6px">54</div>
<div class="ln" style="top:1758.6px">55</div>
<div class="cl" style="top:1759.1px">            } <span class="k">catch</span> {</div>
<div class="ln" style="top:1798.6px">56</div>
<div class="cl" style="top:1799.1px">                <span class="st">Logger</span>.<span class="pv">database</span>.<span class="sf">error</span>(<span class="s">"IndividualListingViewModel: Could not save listing with id </span>\(listingId)<span class="s"> for</span></div>
<div class="b" style="left:1331.1px;top:1399.1px;width:3.9px;height:36px;background:#2f72f5;border-radius:2px;"></div>
<div class="b" style="left:660px;top:229.5px;width:2334px;height:12px;background:transparent;background:linear-gradient(180deg,rgba(0,0,0,0.075),rgba(0,0,0,0));"></div>
<div class="b" style="left:660px;top:189.5px;width:2334px;height:39px;background:#f3f3f3;"></div>
<div class="b" style="left:660px;top:228.5px;width:2334px;height:1.5px;background:#d9d9d9;"></div>
<div class="ln" style="top:191.8px">12</div>
<div class="cl" style="top:192.5px"><span class="k">class</span> <span class="td">IndividualListingViewModel</span>: Observable {</div>
<div class="b" style="left:660px;top:1833px;width:2364px;height:55px;background:#ffffff;"></div>
<div class="b" style="left:660px;top:1832px;width:2364px;height:1.6px;background:#dedede;"></div>
<svg class="b" style="left:682px;top:1852px" width="30" height="18" viewBox="0 0 30 18"><path d="M3.6 0 H21.4 Q23.4 0 24.6 1.6 L29.2 7.6 Q30.2 9 29.2 10.4 L24.6 16.4 Q23.4 18 21.4 18 H3.6 Q0 18 0 14.4 V3.6 Q0 0 3.6 0 Z" fill="#3478f6"/></svg>
<div class="b" style="left:726.6px;top:1849px;width:1.6px;height:24px;background:#d9d9d9;"></div>
<div class="b" style="left:969.0px;top:1849px;width:1.6px;height:24px;background:#d9d9d9;"></div>
<div class="b" style="left:1271.2px;top:1849px;width:1.6px;height:24px;background:#d9d9d9;"></div>
<svg class="b" style="left:749.5px;top:1848px" width="19" height="26" viewBox="0 0 19 26" fill="none" stroke="#767676" stroke-width="1.9"><rect x="1" y="1" width="4.2" height="24" rx="1.6"/><rect x="12.8" y="1" width="4.2" height="24" rx="1.6"/></svg>
<svg class="b" style="left:806px;top:1850px" width="28" height="24" viewBox="0 0 28 24" fill="none" stroke="#b8b8b8" stroke-width="1.8" stroke-linejoin="round" stroke-linecap="round"><path d="M1.4 14.6 L13.2 2.8 L24.6 14.2" stroke-linejoin="miter"/><path d="M17.6 14.6 H25 V7.2" stroke-linejoin="miter"/><rect x="5" y="19.2" width="16.2" height="4.2"/></svg>
<svg class="b" style="left:869.5px;top:1848px" width="19" height="26" viewBox="0 0 19 26" fill="none" stroke="#b8b8b8" stroke-width="1.8" stroke-linejoin="round" stroke-linecap="round"><path d="M9.5 1.4 V15.6 M3.2 9.6 L9.5 16 L15.8 9.6" stroke-width="2"/><rect x="1.2" y="21" width="16.6" height="4.2"/></svg>
<svg class="b" style="left:929.5px;top:1848px" width="19" height="26" viewBox="0 0 19 26" fill="none" stroke="#b8b8b8" stroke-width="1.8" stroke-linejoin="round" stroke-linecap="round"><path d="M9.5 16.4 V1.8 M3.2 8 L9.5 1.6 L15.8 8" stroke-width="2"/><rect x="1.2" y="21" width="16.6" height="4.2"/></svg>
<svg class="b" style="left:989px;top:1848.3px" width="25" height="24" viewBox="0 0 25 24" fill="none" stroke="#767676" stroke-width="1.9"><rect x="1" y="1" width="23" height="5.6" rx="1.8"/><rect x="1" y="9.2" width="23" height="5.6" rx="1.8"/><rect x="1" y="17.4" width="23" height="5.6" rx="1.8"/></svg>
<svg class="b" style="left:1049.5px;top:1847.4px" width="24" height="27" viewBox="0 0 24 27" fill="none" stroke="#767676" stroke-width="1.8" stroke-linejoin="round"><path d="M9 8.2 L21.6 4.2 V20.4 L9 25.4 Z"/><path d="M5.4 22 V6.4 L17.6 2.4"/><path d="M1.6 19.4 V4.8 L13.6 1"/></svg>
<svg class="b" style="left:1107.5px;top:1847.6px" width="27" height="26" viewBox="0 0 27 26" fill="none" stroke="#767676" stroke-width="1.9"><circle cx="5" cy="5" r="3.8"/><circle cx="5" cy="21" r="3.8"/><circle cx="22" cy="13.4" r="3.8"/><path d="M8.4 6.6 L18.6 11.8 M8.4 19.4 L18.6 14.8"/></svg>
<svg class="b" style="left:1169.3px;top:1848.2px" width="23" height="25" viewBox="0 0 23 25" fill="none" stroke="#767676" stroke-width="1.9"><rect x="1" y="1" width="21" height="9.6" rx="4.8"/><rect x="1" y="14.4" width="21" height="9.6" rx="4.8"/><circle cx="6.4" cy="5.8" r="2.7" fill="#767676" stroke="none"/><circle cx="16.6" cy="19.2" r="2.7" fill="#767676" stroke="none"/></svg>
<svg class="b" style="left:1228px;top:1847.4px" width="26" height="26" viewBox="0 0 26 26" fill="none" stroke="#767676" stroke-width="1.9" stroke-linejoin="round"><path d="M24.6 1.4 L1.6 11 H13.4 L15 24.4 Z"/></svg>
<div class="b" style="left:1291.3px;top:1848.8px;width:23px;height:23px;background:#848484;border-radius:5.5px;"></div>
<svg class="b" style="left:1291.3px;top:1848.8px;" width="23" height="23"><use href="#appA"/></svg>
<div class="t " style="left:1325.83px;top:1846.08px;font-size:22.85px;line-height:30px;color:#242424;-webkit-text-stroke:0.25px #242424;letter-spacing:0.408px;">ElectricRide</div>
<div class="t " style="left:2759.43px;top:1846.28px;font-size:22.85px;line-height:30px;color:#808080;letter-spacing:0.616px;">Line: 47  Col: 30</div>
<div class="b" style="left:2954px;top:1849px;width:1.6px;height:24px;background:#d9d9d9;"></div>
<svg class="b" style="left:2973px;top:1848.5px" width="26" height="26" viewBox="0 0 26 26"><rect x="1" y="1" width="24" height="24" rx="4.4" fill="none" stroke="#6e6e6e" stroke-width="1.9"/><rect x="4.4" y="15.8" width="17.6" height="5.6" rx="1.8" fill="#777"/></svg>
</div>
</body></html>
